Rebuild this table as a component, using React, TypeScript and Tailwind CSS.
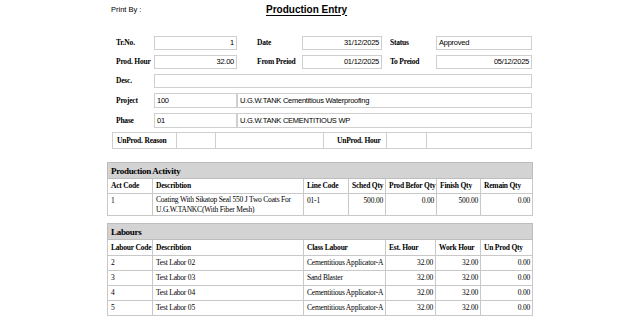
import React from "react";

const lbl = "font-['Liberation_Serif',serif] font-bold text-[7.5px] tracking-[-0.2px] leading-none whitespace-nowrap";
const box = "h-full border border-[#cfcfcf] px-[2px] flex items-center text-[7.5px] tracking-[-0.25px] leading-none whitespace-nowrap overflow-hidden";

const th = "border border-[#c8c8c8] px-[3px] text-left font-bold align-middle whitespace-nowrap";
const td = "border border-[#c8c8c8] px-[3px] align-middle";
const tdr = "border border-[#c8c8c8] px-[2px] align-middle text-right";

const labours = [
  ["2", "Test Labor 02", "Cementitious Applicator-A"],
  ["3", "Test Labor 03", "Sand Blaster"],
  ["4", "Test Labor 04", "Cementitious Applicator-A"],
  ["5", "Test Labor 05", "Cementitious Applicator-A"],
];

export default function App() {
  return (
    <div className="w-[640px] h-[316px] bg-white overflow-hidden font-['Liberation_Sans',sans-serif] text-black">
      <div className="flex h-[19px] items-center pl-[111px]">
        <span className="text-[7.5px] w-[155px] leading-none">Print By :</span>
        <span className="text-[10px] font-bold underline leading-none underline-offset-[1.5px]">Production Entry</span>
      </div>

      <div className="ml-[112px] w-[420px] mt-[17px] flex flex-col gap-y-[5px]">
        <div className="flex h-[14px] items-center">
          <div className={`w-[42px] pl-[4px] ${lbl}`}>Tr.No.</div>
          <div className={`w-[83px] justify-end ${box}`}>1</div>
          <div className={`w-[65px] pl-[20px] ${lbl}`}>Date</div>
          <div className={`w-[80px] justify-end ${box}`}>31/12/2025</div>
          <div className={`w-[54px] pl-[8px] ${lbl}`}>Status</div>
          <div className={`w-[96px] ${box}`}>Approved</div>
        </div>
        <div className="flex h-[14px] items-center">
          <div className={`w-[42px] pl-[4px] ${lbl}`}>Prod. Hour</div>
          <div className={`w-[83px] justify-end ${box}`}>32.00</div>
          <div className={`w-[65px] pl-[20px] ${lbl}`}>From Preiod</div>
          <div className={`w-[80px] justify-end ${box}`}>01/12/2025</div>
          <div className={`w-[54px] pl-[8px] ${lbl}`}>To Preiod</div>
          <div className={`w-[96px] justify-end ${box}`}>05/12/2025</div>
        </div>
        <div className="flex h-[14px] items-center">
          <div className={`w-[42px] pl-[4px] ${lbl}`}>Desc.</div>
          <div className={`w-[378px] ${box}`}></div>
        </div>
        <div className="flex h-[15px] items-center">
          <div className={`w-[42px] pl-[4px] ${lbl}`}>Project</div>
          <div className={`w-[83px] ${box}`}>100</div>
          <div className={`w-[295px] ${box}`}>U.G.W.TANK Cementitious Waterproofing</div>
        </div>
        <div className="flex h-[15px] items-center">
          <div className={`w-[42px] pl-[4px] ${lbl}`}>Phase</div>
          <div className={`w-[83px] ${box}`}>01</div>
          <div className={`w-[295px] ${box}`}>U.G.W.TANK CEMENTITIOUS WP</div>
        </div>
        <div className="flex h-[17px] border border-[#cfcfcf] -mt-[1px]">
          <div className={`w-[64px] pl-[4px] flex items-center border-r border-[#cfcfcf] ${lbl}`}>UnProd. Reason</div>
          <div className="w-[39px] border-r border-[#cfcfcf]"></div>
          <div className="w-[108px] border-r border-[#cfcfcf]"></div>
          <div className={`w-[63px] pl-[13px] flex items-center border-r border-[#cfcfcf] ${lbl}`}>UnProd. Hour</div>
          <div className="w-[40px] border-r border-[#cfcfcf]"></div>
          <div className="flex-1"></div>
        </div>
      </div>

      <table className="table-fixed border-collapse w-[425px] ml-[107px] mt-[13px] font-['Liberation_Serif',serif] text-[7.5px] tracking-[-0.2px] leading-[10px]">
        <colgroup>
          <col className="w-[45px]" />
          <col className="w-[151px]" />
          <col className="w-[45px]" />
          <col className="w-[37px]" />
          <col className="w-[51px]" />
          <col className="w-[44px]" />
          <col className="w-[52px]" />
        </colgroup>
        <tbody>
          <tr className="h-[16px] bg-[#d3d3d3]">
            <td colSpan={7} className="border border-[#bdbdbd] px-[3px] text-[9px] tracking-[-0.3px] font-bold">Production Activity</td>
          </tr>
          <tr className="h-[15px]">
            <td className={th}>Act Code</td>
            <td className={th}>Describtion</td>
            <td className={th}>Line Code</td>
            <td className={th}>Sched Qty</td>
            <td className={th}>Prod Befor Qty</td>
            <td className={th}>Finish Qty</td>
            <td className={th}>Remain Qty</td>
          </tr>
          <tr className="h-[22px]">
            <td className={`${td} align-top pt-[2px]`}>1</td>
            <td className={td}>Coating With Sikatop Seal 550 J Two Coats For U.G.W.TANKC(With Fiber Mesh)</td>
            <td className={`${td} align-top pt-[2px]`}>01-1</td>
            <td className={`${tdr} align-top pt-[2px]`}>500.00</td>
            <td className={`${tdr} align-top pt-[2px]`}>0.00</td>
            <td className={`${tdr} align-top pt-[2px]`}>500.00</td>
            <td className={`${tdr} align-top pt-[2px]`}>0.00</td>
          </tr>
        </tbody>
      </table>

      <table className="table-fixed border-collapse w-[425px] ml-[107px] mt-[7px] font-['Liberation_Serif',serif] text-[7.5px] tracking-[-0.2px] leading-[10px]">
        <colgroup>
          <col className="w-[45px]" />
          <col className="w-[151px]" />
          <col className="w-[82px]" />
          <col className="w-[50px]" />
          <col className="w-[45px]" />
          <col className="w-[52px]" />
        </colgroup>
        <tbody>
          <tr className="h-[16px] bg-[#d3d3d3]">
            <td colSpan={6} className="border border-[#bdbdbd] px-[3px] text-[9px] tracking-[-0.3px] font-bold">Labours</td>
          </tr>
          <tr className="h-[16px]">
            <td className={th}>Labour Code</td>
            <td className={th}>Describtion</td>
            <td className={th}>Class Labour</td>
            <td className={th}>Est. Hour</td>
            <td className={th}>Work Hour</td>
            <td className={th}>Un Prod Qty</td>
          </tr>
          {labours.map((r) => (
            <tr key={r[0]} className="h-[15px]">
              <td className={td}>{r[0]}</td>
              <td className={td}>{r[1]}</td>
              <td className={`${td} whitespace-nowrap`}>{r[2]}</td>
              <td className={tdr}>32.00</td>
              <td className={tdr}>32.00</td>
              <td className={tdr}>0.00</td>
            </tr>
          ))}
        </tbody>
      </table>
    </div>
  );
}
